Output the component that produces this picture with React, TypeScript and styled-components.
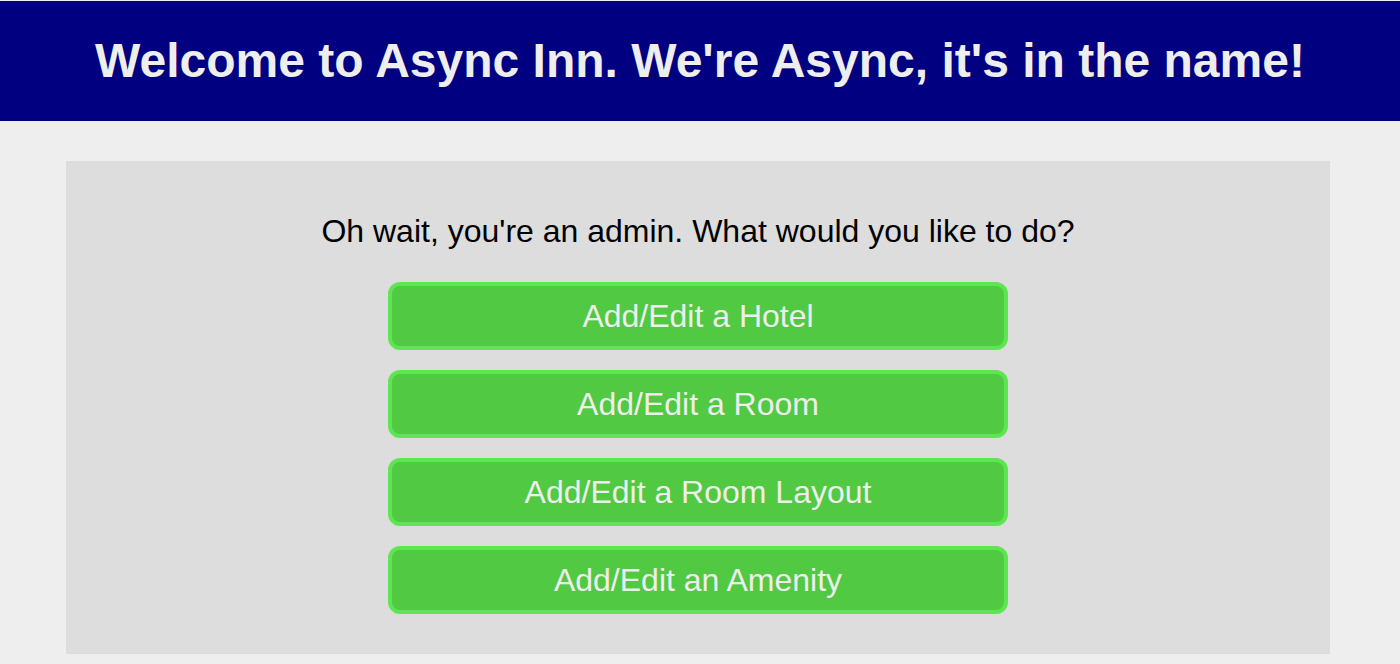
import React from "react";
import styled, { createGlobalStyle } from "styled-components";

const Global = createGlobalStyle`
  html, body { margin: 0; padding: 0; background: #eeeeee; }
  body { font-family: "Liberation Sans", Arial, sans-serif; }
`;

const Page = styled.div`
  padding-top: 1px;
  min-height: 664px;
  box-sizing: border-box;
`;

const Header = styled.header`
  background: #000080;
  height: 120px;
  display: flex;
  align-items: center;
  justify-content: center;
`;

const Title = styled.h1`
  margin: 0 0 2px;
  color: #eeeeee;
  font-size: 48px;
  font-weight: bold;
`;

const Panel = styled.main`
  background: #dddddd;
  margin: 40px 70px 0 66px;
  padding: 50px 0 40px;
  display: flex;
  flex-direction: column;
  align-items: center;
`;

const Prompt = styled.p`
  margin: 0 0 31px;
  font-size: 32px;
  color: #000;
  line-height: 40px;
`;

const Actions = styled.div`
  display: flex;
  flex-direction: column;
  gap: 20px;
`;

const Action = styled.a`
  display: flex;
  align-items: center;
  justify-content: center;
  box-sizing: border-box;
  width: 620px;
  height: 68px;
  background: #52c942;
  border: 4px solid #5de552;
  border-radius: 12px;
  color: #eeeeee;
  font-size: 32px;
  text-decoration: none;
`;

const actions = [
  "Add/Edit a Hotel",
  "Add/Edit a Room",
  "Add/Edit a Room Layout",
  "Add/Edit an Amenity",
];

export default function App() {
  return (
    <Page>
      <Global />
      <Header>
        <Title>Welcome to Async Inn. We're Async, it's in the name!</Title>
      </Header>
      <Panel>
        <Prompt>Oh wait, you're an admin. What would you like to do?</Prompt>
        <Actions>
          {actions.map((a) => (
            <Action key={a} href="#">
              {a}
            </Action>
          ))}
        </Actions>
      </Panel>
    </Page>
  );
}
